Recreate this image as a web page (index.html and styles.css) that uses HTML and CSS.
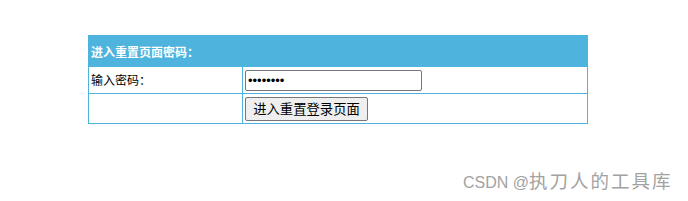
FILE: index.html
```html
<!DOCTYPE html>
<html lang="zh-CN">
<head>
<meta charset="utf-8">
<title>进入重置页面密码</title>
<link rel="stylesheet" href="styles.css">
</head>
<body>
<div class="page">
  <table class="reset-table">
    <colgroup>
      <col class="col-label">
      <col class="col-field">
    </colgroup>
    <tr class="row-head">
      <td colspan="2" class="head-cell">进入重置页面密码：</td>
    </tr>
    <tr class="row-pass">
      <td class="label-cell">输入密码：</td>
      <td class="field-cell"><input class="pass-input" type="password" value="12345678"></td>
    </tr>
    <tr class="row-btn">
      <td class="label-cell"></td>
      <td class="field-cell"><button class="go-btn" type="button">进入重置登录页面</button></td>
    </tr>
  </table>
</div>
<div class="watermark">CSDN @<span class="wm-cjk">执刀人的工具库</span></div>
</body>
</html>
```

FILE: styles.css
```css
html, body {
  margin: 0;
  padding: 0;
  background: #ffffff;
}

body {
  width: 688px;
  height: 201px;
  position: relative;
  overflow: hidden;
  font-family: "Noto Sans CJK SC", "Liberation Sans", sans-serif;
  font-size: 12px;
  color: #000;
}

.page {
  padding: 35px 0 0 88px;
}

.reset-table {
  border-collapse: collapse;
  table-layout: fixed;
  width: 500px;
  border: 1px solid #4eb4de;
}

.col-label { width: 154px; }

.reset-table td {
  border: 1px solid #4eb4de;
  padding: 0 2px;
  vertical-align: middle;
}

.head-cell {
  background: #4eb4de;
  color: #ffffff;
  font-weight: bold;
  height: 29px;
  line-height: 16px;
  padding-top: 1px !important;
}

.row-pass td {
  height: 26px;
}

.row-btn td {
  height: 29px;
}

.label-cell {
  line-height: 16px;
}

.pass-input {
  box-sizing: border-box;
  width: 177px;
  height: 21px;
  margin: 0;
  display: block;
  font-size: 13px;
  padding: 1px 2px;
  border: 1px solid #767676;
  border-radius: 2px;
}

.go-btn {
  box-sizing: border-box;
  display: block;
  height: 24px;
  width: 123px;
  margin: 0;
  padding: 0 6px;
  font-family: "Noto Sans CJK SC", "Liberation Sans", sans-serif;
  font-size: 13.33px;
  color: #000;
  background: #efefef;
  border: 1px solid #767676;
  border-radius: 2px;
}

.watermark {
  position: absolute;
  left: 463px;
  top: 168px;
  font-family: "Liberation Sans", "Noto Sans CJK SC", sans-serif;
  font-size: 16px;
  line-height: 24px;
  color: #a2a2a2;
  white-space: nowrap;
}

.wm-cjk {
  font-family: "Noto Sans CJK SC", sans-serif;
  font-size: 18.5px;
  letter-spacing: 2px;
}
```
